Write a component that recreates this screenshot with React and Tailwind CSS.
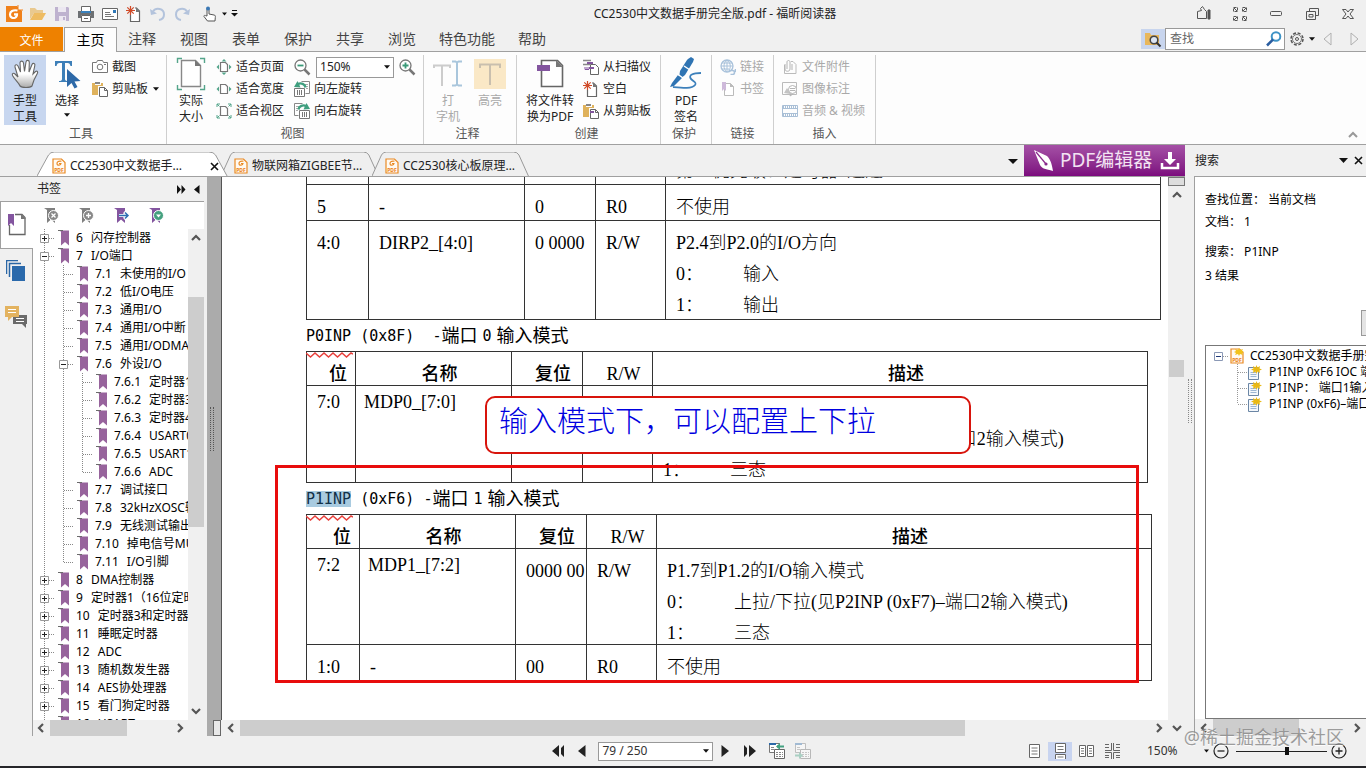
import { useState } from "react";

const tabs = ["注释", "视图", "表单", "保护", "共享", "浏览", "特色功能", "帮助"];

// depth: indent level, box: expander sign, end: last child of its level
const bookmarks = [
  { no: "6", text: "闪存控制器", depth: 0, box: "+" },
  { no: "7", text: "I/O端口", depth: 0, box: "-" },
  { no: "7.1", text: "未使用的I/O", depth: 1 },
  { no: "7.2", text: "低I/O电压", depth: 1 },
  { no: "7.3", text: "通用I/O", depth: 1 },
  { no: "7.4", text: "通用I/O中断", depth: 1 },
  { no: "7.5", text: "通用I/ODMA", depth: 1 },
  { no: "7.6", text: "外设I/O", depth: 1, box: "-" },
  { no: "7.6.1", text: "定时器1", depth: 2 },
  { no: "7.6.2", text: "定时器3", depth: 2 },
  { no: "7.6.3", text: "定时器4", depth: 2 },
  { no: "7.6.4", text: "USART0", depth: 2 },
  { no: "7.6.5", text: "USART1", depth: 2 },
  { no: "7.6.6", text: "ADC", depth: 2, end: true },
  { no: "7.7", text: "调试接口", depth: 1 },
  { no: "7.8", text: "32kHzXOSC输入", depth: 1 },
  { no: "7.9", text: "无线测试输出", depth: 1 },
  { no: "7.10", text: "掉电信号MUX", depth: 1 },
  { no: "7.11", text: "I/O引脚", depth: 1, end: true },
  { no: "8", text: "DMA控制器", depth: 0, box: "+" },
  { no: "9", text: "定时器1（16位定时器）", depth: 0, box: "+" },
  { no: "10", text: "定时器3和定时器4", depth: 0, box: "+" },
  { no: "11", text: "睡眠定时器", depth: 0, box: "+" },
  { no: "12", text: "ADC", depth: 0, box: "+" },
  { no: "13", text: "随机数发生器", depth: 0, box: "+" },
  { no: "14", text: "AES协处理器", depth: 0, box: "+" },
  { no: "15", text: "看门狗定时器", depth: 0, box: "+" },
  { no: "16", text: "USART", depth: 0, box: "+" },
];

const results = ["P1INP 0xF6 IOC 端口", "P1INP： 端口1输入模式", "P1INP (0xF6)–端口1"];

function Svg({ w = 16, h = 16, children, className = "" }) {
  return (
    <svg width={w} height={h} viewBox={`0 0 ${w} ${h}`} fill="none" className={`shrink-0 ${className}`} aria-hidden="true">
      {children}
    </svg>
  );
}

function Down({ className = "" }) {
  return <Svg w={7} h={4} className={className}><path d="M0 0h7L3.5 4z" fill="#111" /></Svg>;
}

function Chevron({ dir }) {
  const d = {
    up: "M1 7l4-4 4 4",
    down: "M1 3l4 4 4-4",
    left: "M7 1L3 5l4 4",
    right: "M3 1l4 4-4 4",
  };
  return <Svg w={10} h={10}><path d={d[dir]} stroke="#555" strokeWidth="2.2" /></Svg>;
}

/* ---------- quick access icons ---------- */

function AppLogo() {
  return (
    <Svg w={18} h={18}>
      <path d="M1 1h11l5 5v11H1z" fill="#f0811a" />
      <path d="M13 0v5h5" fill="#f7f7f7" stroke="#f0811a" />
      <path d="M12.500 5.500C8 4.500 5 6.500 5 9.500s2.500 4 5 3.200c1.500-.6 2-2 2-3.400H9" stroke="#fff" strokeWidth="2.200" />
    </Svg>
  );
}

function FolderOpen() {
  return (
    <Svg w={18} h={16}>
      <path d="M1 13V2h5l2 2h6v3H5z" fill="#e9c98f" />
      <path d="M5 7h12l-4 7H1z" fill="#eebc62" />
    </Svg>
  );
}

function Disk() {
  return (
    <Svg>
      <path d="M1 1h13l1 1v13H1z" fill="#beb2cf" />
      <path d="M4 1h8v5H4zM5 10h7v5H5z" fill="#ece8f1" />
      <path d="M9 11h2v3H9z" fill="#beb2cf" />
    </Svg>
  );
}

function Printer() {
  return (
    <Svg>
      <path d="M3.500.5h9v5h-9z" fill="#fff" stroke="#666" />
      <path d="M0 5h16v7h-3V9H3v3H0z" fill="#6d7073" />
      <path d="M3 5h10v2H3z" fill="#3b82bd" />
      <path d="M3.500 9.500h9v6h-9z" fill="#fff" stroke="#666" />
      <path d="M6 12.500h4" stroke="#666" />
    </Svg>
  );
}

function Mail() {
  return (
    <Svg w={17} h={14}>
      <path d="M.5 1.500h15v11H.5z" fill="#fff" stroke="#666" />
      <path d="M3 5.500h5M3 7.500h6M3 9.500h9" stroke="#777" />
      <path d="M11 3h3v3h-3z" fill="#2f78b7" />
    </Svg>
  );
}

function Burst() {
  return (
    <Svg>
      <path d="M4.500 9v6.500h9V5l-3-3H9" fill="#fff" stroke="#666" strokeWidth="1.200" />
      <path d="M10 1.500V6h4z" fill="#777" />
      <path d="M4.500 0v9M0 4.500h9M1.300 1.300l6.400 6.400M7.700 1.300L1.300 7.700" stroke="#d04a28" strokeWidth="1.200" />
    </Svg>
  );
}

function Undo({ flip }) {
  return (
    <Svg className={flip ? "-scale-x-100" : ""}>
      <path d="M3 5.500C6 1 14 2.500 14 8.500c0 3-2 5-5 5.500" stroke="#b3c3dc" strokeWidth="2" />
      <path d="M0 3l1 6 6-1.500z" fill="#b3c3dc" />
    </Svg>
  );
}

function Pointer() {
  return (
    <Svg>
      <path d="M5 10V3.500c0-1.500 2-1.500 2 0V8l5 1c1.500.3 1.500 1 1.300 2.500L13 15H5.500L2 10.500c-.5-1 1-1.500 1.700-.8z" fill="#fff" stroke="#555" />
      <circle cx="6" cy="2.500" r="2" fill="#3a78b5" />
    </Svg>
  );
}

/* ---------- ribbon icons ---------- */

function Hand() {
  return (
    <Svg w={28} h={30}>
      <defs>
        <linearGradient id="palm" x1="0" y1="0" x2="0" y2="1">
          <stop offset=".5" stopColor="#fff" />
          <stop offset="1" stopColor="#aaa" />
        </linearGradient>
      </defs>
      <path
        d="M9 27c-1-3-5-6-7.500-10.500-.8-2 1-3 2.500-1.500l3 3L4 8c-.5-2.500 2-3 3-1l2.500 6L9 4c0-2.500 3-2.500 3.500 0l1 8.500L15 3c.5-2.500 3.500-2 3.300.5L18 13l3-7.500c1-2 3.500-1 2.800 1.200L22 15l2.500-2.500c1.500-1 2.800.3 1.800 2L23 21l-2 6c-2 2-10 2-12 0z"
        fill="url(#palm)" stroke="#666" strokeWidth="1.100"
      />
    </Svg>
  );
}

function SelectText() {
  return (
    <Svg w={28} h={30}>
      <path d="M2 2h17v5h-1.500c-.5-2-1-3-3-3H12v16c0 1.500 1 2 3 2v1H6v-1c2 0 3-.5 3-2V4H6.500c-2 0-2.500 1-3 3H2z" fill="#3d7fb8" />
      <path d="M14 10v18l4.500-4 3 5.500 3-1.500-3-5.500 6-.5z" fill="#2d69a8" />
    </Svg>
  );
}

function Camera() {
  return (
    <Svg>
      <path d="M.5 3.500h4l1-2h5l1 2h4v10H.5z" fill="#fff" stroke="#777" />
      <circle cx="8" cy="8" r="2.800" stroke="#777" />
      <path d="M12 5.500h2" stroke="#777" />
    </Svg>
  );
}

function Clipboard({ mark }) {
  return (
    <Svg>
      <path d="M0 2h3v2h6V2h2v3H6v9H0z" fill="#dfb25c" />
      <path d="M3 1h5v2H3z" fill="#888" />
      <path d="M7.500 6.500h5l3 3v6h-8z" fill="#fff" stroke="#666" />
      <path d="M12.500 6.500v3h3" stroke="#666" />
      {mark && <path d="M7 8h4v2H7z" fill="#82559d" />}
    </Svg>
  );
}

function ActualSize() {
  return (
    <Svg w={30} h={34}>
      <path d="M5.500 3.500h14l5 5v21h-19z" fill="#fff" stroke="#888" strokeWidth="1.400" />
      <path d="M19 3v6h6z" fill="#777" />
      <path d="M1.500 6V1.500H6M24 1.500h4.500V6M28.500 28v4.500H24M6 32.500H1.500V28" stroke="#55a58b" strokeWidth="1.400" />
    </Svg>
  );
}

function FitPage({ kind }) {
  return (
    <Svg>
      <path d="M4.500 3.500h5l2 2v7h-7z" fill="#fff" stroke="#777" strokeWidth="1.200" />
      {kind !== "view" && <path d="M3 5.500v5L.5 8zM13 5.500v5L15.500 8z" fill="#55a58b" />}
      {kind === "page" && <path d="M5.500 2.500h5L8 0zM5.500 13.500h5L8 16z" fill="#55a58b" />}
      {kind === "view" && <path d="M1 4V1h3M12 1h3v3M15 12v3h-3M4 15H1v-3M1 1l2.500 2.500M15 1l-2.500 2.500M1 15l2.500-2.500M15 15l-2.500-2.500" stroke="#55a58b" />}
    </Svg>
  );
}

function Zoom({ plus }) {
  return (
    <Svg w={17} h={17}>
      <circle cx="6.500" cy="6.500" r="5.500" fill="#fff" stroke="#777" strokeWidth="1.300" />
      <path d="M10.500 10.500l5 5" stroke="#777" strokeWidth="2.500" />
      <path d={plus ? "M3.500 6.500h6M6.500 3.500v6" : "M3.500 6.500h6"} stroke="#3a9a78" strokeWidth="1.800" />
    </Svg>
  );
}

function Rotate({ right }) {
  return (
    <Svg className={right ? "-scale-x-100" : ""}>
      <path d="M7.500.5h8v12h-4" fill="#fff" stroke="#888" />
      <path d="M9 3.500h5M11 5.500h3M12 7.500h2" stroke="#aaa" />
      <path d="M.5 7.500h10v8H.5z" fill="#fff" stroke="#777" />
      <path d="M3.500 9v5M5.500 9v5M7.500 9v5" stroke="#777" />
      <path d="M11.500 6.500C11 3 7 1.500 4 3" stroke="#3f9f7f" strokeWidth="2.400" />
      <path d="M0 6l6.500.5L3.500 0z" fill="#3f9f7f" />
    </Svg>
  );
}

function Typewriter() {
  return (
    <Svg w={30} h={30}>
      <path d="M1 9V6.500h16V9M9 6.500V27" stroke="#ccc" strokeWidth="2" />
      <path d="M19 2.500h3.500l1.500 1 1.500-1H29M24 3.500v22M19 26.500h3.500l1.500-1 1.500 1H29" stroke="#a9c6dc" strokeWidth="2" />
    </Svg>
  );
}

function Highlight() {
  return (
    <Svg w={32} h={32}>
      <path d="M0 1h32v30H0z" fill="#fae8c6" />
      <path d="M6 10V6.500h20V10M16 6.500V27" stroke="#c9bfae" strokeWidth="2" />
    </Svg>
  );
}

function ToPdf() {
  return (
    <Svg w={28} h={32}>
      <path d="M5.500 2.500h16l5 5v21h-21z" fill="#fff" stroke="#666" strokeWidth="1.600" />
      <path d="M20 2v7h7z" fill="#777" />
      <path d="M1 7h13v6H1z" fill="#83559f" />
    </Svg>
  );
}

function Scanner() {
  return (
    <Svg>
      <path d="M0 1.500h8M0 5.500h7" stroke="#888" strokeWidth="1.500" />
      <path d="M4 3h6v2H4z" fill="#83559f" />
      <path d="M2 8v2.500h4M3 9h4" stroke="#83559f" />
      <path d="M7.500 5.500h5l3 3v7h-8z" fill="#fff" stroke="#666" />
      <path d="M6 8h5v2H6z" fill="#83559f" />
    </Svg>
  );
}

function SignPen() {
  return (
    <Svg w={32} h={34}>
      <path d="M18 2l3-2 3 2-1 3-8 13-5 4-1-1 1-7 7-11z" fill="#2f74b3" />
      <path d="M8 18l4 3-8 8-4 1 2-4z" fill="#2f74b3" />
      <path d="M6 16l7 5M14 9l6 4" stroke="#fff" strokeWidth="1.500" />
      <path d="M31 16c-8 0-13 2-10 6 3 3 6 3 4 6-3 4-12 3-22 2" stroke="#3d80bb" strokeWidth="1.800" />
    </Svg>
  );
}

function Globe() {
  return (
    <Svg>
      <circle cx="7" cy="7" r="6" stroke="#a9c2db" strokeWidth="1.300" />
      <path d="M1 7h12M2 4h10M2 10h7M7 1v12M7 1C3 4 3 10 7 13M7 1c4 3 4 8 2 10" stroke="#a9c2db" />
      <path d="M8.500 11.500h4a2 2 0 010 4h-2M15.500 10v3" stroke="#a9c2db" strokeWidth="1.600" />
    </Svg>
  );
}

function PageMark() {
  return (
    <Svg>
      <path d="M4.500 2.500h6l3 3v9h-9z" fill="#fff" stroke="#bbb" />
      <path d="M10 2v4h4z" fill="#bbb" />
      <path d="M2 1h4v9L4 8l-2 2z" fill="#ceb9da" />
    </Svg>
  );
}

function Clip() {
  return (
    <Svg>
      <path d="M9 2.500h2l3 3v9H2.500V6" stroke="#bbb" />
      <path d="M5 10V3c0-2 3-2 3 0v7c0 3-5 3-5 0V5M10 5v6" stroke="#b3b3b3" />
    </Svg>
  );
}

function ImageNote() {
  return (
    <Svg>
      <path d="M.5 1.500h14v12H.5z" stroke="#bbb" />
      <path d="M2 12l3-5 3 4v2z" fill="#c4c4c4" />
      <circle cx="10.500" cy="8.500" r="4" fill="#fff" stroke="#b5b5b5" />
      <path d="M8 7.500h5M8 9.500h5M9 12l-1 3 3-2" stroke="#b5b5b5" />
    </Svg>
  );
}

function Film() {
  return (
    <Svg>
      <path d="M.5 2.500h15v11H.5z" stroke="#a9bfd6" />
      <path d="M1 4h14M1 12h14" stroke="#a9bfd6" strokeWidth="2" strokeDasharray="1 1" />
      <path d="M1 5.500h14M1 10.500h14" stroke="#a9bfd6" />
    </Svg>
  );
}

/* ---------- panel icons ---------- */

function PdfIcon({ star }) {
  return (
    <Svg w={14} h={16}>
      <path d="M1 1h8.500L13 4.500V15H1z" fill="#fffaf2" stroke="#ea8a24" strokeWidth="1.200" />
      {star
        ? <path d="M9 0l1 2 3-1-1 2 2 1-2 1 1 2-3-1-1 2-1-2-3 1 1-2-2-1 2-1-1-2 3 1z" fill="#f2c21c" />
        : <path d="M9.500 3.300C7 2.500 4.700 3.800 5 5.800s3.800 1.800 4-.3H7" stroke="#ea8a24" strokeWidth="1.200" />}
      <text x="7" y="14" textAnchor="middle" fontSize="5" fontWeight="bold" fill="#ea7d14">PDF</text>
    </Svg>
  );
}

function ResultIcon() {
  return (
    <Svg w={14} h={15}>
      <path d="M.5 2.500h10v12H.5z" fill="#f4f8fc" stroke="#6b86a5" />
      <path d="M2.500 7.500h6M2.500 9.500h6M2.500 11.500h6" stroke="#9db7d4" />
      <path d="M8.500 0l1 2.500L12 1l-.5 2.500 2.500 1-2.500 1 .5 2.500-2.500-1.500-1 2.500-1-2.500L5 8l.5-2.500-2.500-1 2.500-1L5 1l2.500 1.500z" fill="#eab914" />
    </Svg>
  );
}

function BookmarkIcon() {
  return (
    <Svg w={12} h={16}>
      <path d="M2 .5h9v15l-4-3.500-4 3.500V2z" fill="#97639c" />
      <path d="M0 .5h5" stroke="#6b6b6b" />
    </Svg>
  );
}

function MarkTool({ kind }) {
  const fill = kind === "close" || kind === "add" ? "#808080" : "#83559f";
  return (
    <Svg w={16} h={17}>
      <path d="M0 1h11v15l-4-3.500L3 16V3z" fill={fill} />
      {kind === "close" && <><circle cx="9.500" cy="8.500" r="5" fill="#888" stroke="#fff" /><path d="M7.500 6.500l4 4m0-4l-4 4" stroke="#fff" strokeWidth="1.300" /></>}
      {kind === "add" && <><circle cx="9.500" cy="8.500" r="5" fill="#888" stroke="#fff" /><path d="M9.500 6v5M7 8.500h5" stroke="#fff" strokeWidth="1.300" /></>}
      {kind === "go" && <path d="M5 8.500h8M10 5l4 3.500-4 3.500" stroke="#fff" strokeWidth="3" />}
      {kind === "go" && <path d="M5 8.500h9M11 5.500l3 3-3 3" stroke="#2f6fb3" strokeWidth="1.500" />}
      {kind === "menu" && <><circle cx="9.500" cy="8.500" r="5" fill="#45a17f" stroke="#fff" /><path d="M7 7.500h5L9.500 10.500z" fill="#fff" /></>}
    </Svg>
  );
}

/* ---------- ribbon building blocks ---------- */

function Group({ label, className, children }) {
  return (
    <section className={`flex h-[89px] shrink-0 flex-col border-r border-[#cfcfcf] ${className}`} aria-label={label}>
      <div className="flex h-[70px]">{children}</div>
      <div className="h-[18px] pr-2 text-center leading-[18px] text-[#555]">{label}</div>
    </section>
  );
}

function BigButton({ icon, lines, className = "w-[42px]", disabled, arrow }) {
  return (
    <button disabled={disabled} className={`flex h-[70px] shrink-0 flex-col items-center leading-4 disabled:text-[#a9a9a9] ${className}`}>
      <span className="flex h-[38px] items-center">{icon}</span>
      {lines.map(l => <span key={l}>{l}</span>)}
      {arrow && <Down className="mt-1 w-[6px]" />}
    </button>
  );
}

function SmallButton({ icon, label, disabled, arrow }) {
  return (
    <button disabled={disabled} className="flex h-[22px] items-center gap-1 whitespace-nowrap disabled:text-[#a9a9a9]">
      {icon}
      <span>{label}</span>
      {arrow && <Down className="ml-px w-[6px]" />}
    </button>
  );
}

function TitleBar() {
  return (
    <header className="flex h-[27px] shrink-0 items-center">
      <div className="flex w-[240px] items-center pl-[2px]">
        {[<AppLogo />, <FolderOpen />, <Disk />, <Printer />, <Mail />, <Burst />, <Undo />, <Undo flip />].map((icon, i) => (
          <button key={i} className="flex h-6 w-6 items-center justify-center">{icon}</button>
        ))}
        <button className="ml-2 flex items-center gap-1"><Pointer /><Down className="w-[5px]" /></button>
        <button className="ml-1">
          <Svg w={7} h={7}><path d="M1 .5h5" stroke="#111" /><path d="M0 3h7L3.500 6.500z" fill="#111" /></Svg>
        </button>
      </div>
      <h1 className="flex-1 pl-1 text-center">CC2530中文数据手册完全版.pdf - 福昕阅读器</h1>
      <div className="flex text-[#555]">
        <button className="flex w-9 justify-center" aria-label="皮肤">
          <Svg><path d="M1.500 12.500v-7l4-1-1-2 2-2 2 3 2 2v7z" stroke="#555" /><path d="M12 4h2v9h-2z" fill="#555" stroke="#555" /></Svg>
        </button>
        <button className="flex w-9 justify-center" aria-label="全屏">
          <Svg><path d="M1.500 5.500v-4h4v4zM10.500 5.500v-4h4v4zM1.500 14.500v-4h4v4zM10.500 14.500v-4h4v4z" stroke="#555" strokeDasharray="3 1" /><path d="M2 2l3 3M14 2l-3 3M2 14l3-3M14 14l-3-3" stroke="#555" /></Svg>
        </button>
        <button className="flex w-9 justify-center" aria-label="最小化">
          <Svg><rect x="2.500" y="5.500" width="11" height="4" rx="1" stroke="#555" /></Svg>
        </button>
        <button className="flex w-9 justify-center" aria-label="还原">
          <Svg><path d="M5.500 5.500v-3h9v7h-3M2.500 5.500h9v8h-9zM5 8.500h4v2.500H5z" stroke="#555" /></Svg>
        </button>
        <button className="flex w-9 justify-center" aria-label="关闭">
          <Svg><path d="M2.500 3.500h3.500l2 2.500 2-2.500h3.500L10 8l3.500 4.500H10l-2-2.500-2 2.500H2.500L6 8z" stroke="#555" /></Svg>
        </button>
      </div>
    </header>
  );
}

function MenuBar() {
  return (
    <nav className="flex h-[25px] shrink-0 border-b border-[#a0a0a0] text-sm text-[#444]">
      <button className="w-[63px] bg-[#ee8100] pt-1 text-xs text-white">文件</button>
      <button className="-mb-px ml-px w-[53px] border border-b-0 border-[#a0a0a0] bg-[#fdfdfd] text-black">主页</button>
      <div className="-ml-px flex">
        {tabs.map(t => (
          <button key={t} className={t.length > 2 ? "w-[78px]" : "w-[52px]"}>{t}</button>
        ))}
      </div>
      <div className="ml-auto flex items-center pr-[7px] text-xs">
        <button className="flex h-5 w-6 items-center justify-center bg-[#c8d5ee]" aria-label="高级查找">
          <Svg w={18} h={17}>
            <path d="M1 2h5l1 2h8v10H1z" fill="#e8b75c" />
            <circle cx="10" cy="9" r="3.800" fill="#dbe4f2" stroke="#444" strokeWidth="1.500" />
            <path d="M12.500 11.500l4 4" stroke="#333" strokeWidth="2" />
          </Svg>
        </button>
        <label className="flex h-[22px] w-[120px] items-center border border-[#999] bg-white pr-[2px] pl-1">
          <input aria-label="查找" placeholder="查找" className="w-full min-w-0 bg-transparent outline-none placeholder:text-[#666]" />
          <Svg><circle cx="10" cy="5.500" r="4.300" stroke="#3e93c6" strokeWidth="2" /><path d="M7 8.500l-6 6" stroke="#2a5da0" strokeWidth="2.500" /></Svg>
        </label>
        <button className="ml-1 flex items-center gap-1" aria-label="设置">
          <Svg><circle cx="8" cy="8" r="6" stroke="#555" strokeWidth="1.500" strokeDasharray="3 1.700" /><circle cx="8" cy="8" r="4.500" stroke="#777" /><circle cx="8" cy="8" r="1.500" stroke="#555" /></Svg>
          <Down className="w-[6px]" />
        </button>
        <button className="ml-2" aria-label="上一个"><Svg w={9} h={14}><path d="M8 1v12L1 7z" stroke="#b0b0b0" /></Svg></button>
        <button className="ml-[18px]" aria-label="下一个"><Svg w={9} h={14}><path d="M1 1v12l7-6z" stroke="#b0b0b0" /></Svg></button>
      </div>
    </nav>
  );
}

function Ribbon() {
  const [zoom, setZoom] = useState("150%");
  return (
    <div className="flex h-[93px] shrink-0 border-b border-[#a0a0a0] bg-[#fdfdfd] pt-[3px]">
      <Group label="工具" className="w-[167px] pl-1">
        <BigButton icon={<Hand />} lines={["手型", "工具"]} className="w-[42px] bg-[#c7d6ef]" />
        <BigButton icon={<SelectText />} lines={["选择"]} arrow />
        <div className="ml-1 flex flex-col pt-px">
          <SmallButton icon={<Camera />} label="截图" />
          <SmallButton icon={<Clipboard />} label="剪贴板" arrow />
        </div>
      </Group>
      <Group label="视图" className="w-[257px] pl-[3px]">
        <BigButton icon={<ActualSize />} lines={["实际", "大小"]} />
        <div className="ml-1 flex flex-col pt-px">
          <SmallButton icon={<FitPage kind="page" />} label="适合页面" />
          <SmallButton icon={<FitPage kind="width" />} label="适合宽度" />
          <SmallButton icon={<FitPage kind="view" />} label="适合视区" />
        </div>
        <div className="ml-[10px] flex flex-col pt-px">
          <div className="flex h-[22px] items-center gap-[5px]">
            <button aria-label="缩小"><Zoom /></button>
            <span className="relative flex items-center">
              <select aria-label="缩放比例" value={zoom} onChange={e => setZoom(e.target.value)} className="h-[21px] w-[78px] appearance-none border border-[#999] bg-white pl-[3px] leading-4">
                <option>100%</option>
                <option>150%</option>
              </select>
              <Down className="absolute right-1 w-[6px]" />
            </span>
            <button aria-label="放大"><Zoom plus /></button>
          </div>
          <SmallButton icon={<Rotate />} label="向左旋转" />
          <SmallButton icon={<Rotate right />} label="向右旋转" />
        </div>
      </Group>
      <Group label="注释" className="w-[93px] pl-[3px]">
        <BigButton icon={<Typewriter />} lines={["打", "字机"]} disabled />
        <BigButton icon={<Highlight />} lines={["高亮"]} disabled />
      </Group>
      <Group label="创建" className="w-[144px] pl-1">
        <BigButton icon={<ToPdf />} lines={["将文件转", "换为PDF"]} className="w-[58px]" />
        <div className="ml-1 flex flex-col pt-px">
          <SmallButton icon={<Scanner />} label="从扫描仪" />
          <SmallButton icon={<Burst />} label="空白" />
          <SmallButton icon={<Clipboard mark />} label="从剪贴板" />
        </div>
      </Group>
      <Group label="保护" className="w-[51px] pl-1">
        <BigButton icon={<SignPen />} lines={["PDF", "签名"]} />
      </Group>
      <Group label="链接" className="w-[62px] pl-2">
        <div className="flex flex-col pt-px">
          <SmallButton icon={<Globe />} label="链接" disabled />
          <SmallButton icon={<PageMark />} label="书签" disabled />
        </div>
      </Group>
      <Group label="插入" className="w-[102px] pl-2">
        <div className="flex flex-col pt-px">
          <SmallButton icon={<Clip />} label="文件附件" disabled />
          <SmallButton icon={<ImageNote />} label="图像标注" disabled />
          <SmallButton icon={<Film />} label="音频 & 视频" disabled />
        </div>
      </Group>
      <button className="mt-auto mr-2 mb-1 ml-auto" aria-label="收起功能区">
        <Svg w={10} h={10}><path d="M1 7l4-4 4 4" stroke="#999" strokeWidth="2" /></Svg>
      </button>
    </div>
  );
}

function DocTab({ title, active, className }) {
  return (
    <div className={`relative flex h-6 items-center gap-1 pt-1 ${className}`}>
      <svg viewBox="0 0 200 24" preserveAspectRatio="none" className="absolute inset-0 h-full w-full" aria-hidden="true">
        <path d="M0 24L12 3q2-3 6-3h161q5 0 7 3l12 21" fill={active ? "#fff" : "#efefef"} stroke="#999" vectorEffect="non-scaling-stroke" />
      </svg>
      <span className="relative flex"><PdfIcon /></span>
      <button className="relative whitespace-nowrap">{title}</button>
      {active && (
        <button className="relative mr-[10px] ml-auto" aria-label="关闭标签">
          <Svg w={9} h={9}><path d="M1 1l7 7M8 1L1 8" stroke="#111" strokeWidth="1.600" /></Svg>
        </button>
      )}
    </div>
  );
}

function DocTabs() {
  return (
    <div className="flex h-8 shrink-0 items-end border-b border-[#a0a0a0]">
      <DocTab title="CC2530中文数据手…" active className="z-10 ml-[37px] w-[192px] pl-[15px]" />
      <DocTab title="物联网箱ZIGBEE节…" className="-ml-2 w-[159px] pl-[13px]" />
      <DocTab title="CC2530核心板原理…" className="-ml-2 w-[158px] pl-[13px]" />
      <button className="mr-[6px] mb-3 ml-auto" aria-label="标签列表"><Svg w={10} h={5}><path d="M0 0h10L5 5z" fill="#111" /></Svg></button>
      <button className="flex h-[31px] w-[161px] items-center bg-linear-to-b from-[#a550a6] to-[#7c0a7e] pl-[9px] text-[19px] text-[#f3e3f3]">
        <Svg w={22} h={24}><path d="M1 1l13 6c4 4 5 9 6 15-7-2-11-2-13-6z" fill="#fff" /><path d="M3 3l10 12" stroke="#8a2a8c" strokeWidth="1.200" /><circle cx="13" cy="15" r="1.600" fill="#8a2a8c" /></Svg>
        <span className="ml-[5px]">PDF编辑器</span>
        <Svg w={20} h={20} className="mr-[5px] ml-auto"><path d="M8 1h4v7h4l-6 6-6-6h4z" fill="#fff" /><path d="M2 12v5h16v-5" stroke="#fff" strokeWidth="2.500" /></Svg>
      </button>
    </div>
  );
}

/* ---------- left: bookmarks ---------- */

function Guide({ from = 0, to = 18, tee, box }) {
  return (
    <Svg w={19} h={18}>
      <path d={`M9.500 ${from}V${to}`} stroke="#888" strokeDasharray="1 1" />
      {tee && <path d="M10 9.500h10" stroke="#888" strokeDasharray="1 1" />}
      {box && (
        <>
          <path d="M5.500 5.500h8v8h-8z" fill="#fff" stroke="#999" />
          <path d={box === "+" ? "M7 9.500h5M9.500 7v5" : "M7 9.500h5"} stroke="#222" />
        </>
      )}
    </Svg>
  );
}

function BookmarkRow({ item }) {
  return (
    <li className="flex h-[18px] items-center whitespace-nowrap">
      {Array.from({ length: item.depth }, (_, i) => <Guide key={i} />)}
      <Guide tee box={item.box} to={item.end ? 9 : 18} />
      <span className="flex w-[19px] shrink-0 justify-center"><BookmarkIcon /></span>
      <a href="#bookmark" className="ml-[3px] flex gap-2"><span>{item.no}</span><span>{item.text}</span></a>
    </li>
  );
}

function SideBar() {
  return (
    <aside className="flex w-[207px] shrink-0 flex-col pr-[3px]">
      <div className="flex h-6 shrink-0 items-center pl-[37px]">
        <h2>书签</h2>
        <button className="ml-auto" aria-label="展开"><Svg w={9} h={9}><path d="M0 0l4 4.500L0 9zM4.500 0l4 4.500-4 4.500z" fill="#111" /></Svg></button>
        <button className="mr-1 ml-2" aria-label="收起"><Svg w={6} h={9}><path d="M5.500 0v9L0 4.500z" fill="#111" /></Svg></button>
      </div>
      <div className="flex min-h-0 flex-1">
        <div className="flex w-[33px] shrink-0 flex-col items-stretch">
          <button className="flex h-12 items-center justify-center border border-r-0 border-[#a0a0a0] bg-white" aria-label="书签">
            <Svg w={20} h={24}><path d="M8 1.500h7l3 3v17H2.500V12" stroke="#666" strokeWidth="1.300" /><path d="M14 1v5h5z" fill="#777" /><path d="M1 1h6v12l-3-3-3 3z" fill="#83559f" /></Svg>
          </button>
          <button className="flex h-[44px] items-center justify-center border-r border-[#a0a0a0]" aria-label="页面">
            <Svg w={20} h={22}><path d="M.5 14V.5H12M3.500 17V3.500H15" stroke="#2a66a5" strokeWidth="1.500" /><path d="M6 6h13v15H6z" fill="#2a69ab" /></Svg>
          </button>
          <button className="flex h-12 items-center justify-center border-r border-[#a0a0a0]" aria-label="注释">
            <Svg w={24} h={24}><path d="M9 10h14v9h-1v4l-4-4H9z" fill="#6b6b6b" /><path d="M1 1h14v11H8l-4 4v-4H1z" fill="#e3b360" /><path d="M4 4.500h8M4 7.500h8M12 13.500h8M12 16.500h8" stroke="#fff" strokeWidth="1.200" /></Svg>
          </button>
          <div className="flex-1 border-r border-[#a0a0a0]" />
        </div>
        <div className="flex min-w-0 flex-1 flex-col border-t border-[#a0a0a0] bg-white">
          <div className="flex h-[27px] shrink-0 items-center gap-[19px] pl-[11px]">
            {["close", "add", "go", "menu"].map(k => <button key={k} aria-label={k}><MarkTool kind={k} /></button>)}
          </div>
          <div className="flex min-h-0 flex-1 overflow-hidden">
            <ul className="min-w-0 flex-1 overflow-hidden pl-[2px] text-black">
              {bookmarks.map(b => <BookmarkRow key={b.no} item={b} />)}
            </ul>
            <div className="flex w-4 flex-col items-center bg-[#f0f0f0] py-1">
              <Chevron dir="up" />
              <div className="mt-[54px] h-[230px] w-full bg-[#cdcdcd]" />
              <span className="mt-auto"><Chevron dir="down" /></span>
            </div>
          </div>
          <div className="flex h-4 shrink-0 items-center bg-[#f0f0f0] pl-[3px]">
            <Chevron dir="left" />
            <div className="ml-1 h-full w-[77px] bg-[#cdcdcd]" />
            <span className="mr-[19px] ml-auto"><Chevron dir="right" /></span>
          </div>
        </div>
      </div>
    </aside>
  );
}

/* ---------- the page itself ---------- */

function Option({ bit, children }) {
  return <div className="flex h-[22px] whitespace-nowrap"><span className="w-[67px]">{bit}：</span>{children}</div>;
}

function Td({ children, className = "pt-[9px] pl-[10px]" }) {
  return <td className={`border border-[#333] p-0 align-top whitespace-nowrap ${className}`}>{children}</td>;
}

function Th({ children, className = "text-center" }) {
  return <th className={`border border-[#333] p-0 pt-[11px] align-top leading-[22px] font-medium ${className}`}>{children}</th>;
}

function HeadRow() {
  return (
    <thead>
      <tr className="h-[34px]">
        <Th className="pr-2 text-right">位</Th>
        <Th className="pl-3 text-center">名称</Th>
        <Th className="pr-[11px] text-right">复位</Th>
        <Th className="pl-3 text-center font-normal">R/W</Th>
        <Th className="pl-3 text-center">描述</Th>
      </tr>
    </thead>
  );
}

function Cols({ first }) {
  return (
    <colgroup>
      <col className={first} />
      <col className="w-[156px]" />
      <col className="w-[71px]" />
      <col className="w-[70px]" />
      <col className="w-[495px]" />
    </colgroup>
  );
}

function SectionTitle({ reg, mark, rest, port }) {
  return (
    <h3 className="relative flex h-[31px] items-center pt-[2px] font-['DejaVu_Sans_Mono','Noto_Sans_CJK_SC',monospace] text-[15px] leading-5 font-normal whitespace-pre">
      <span className={mark ? "bg-[#a9cbe0] leading-4 text-[#123047]" : ""}>{reg}</span>
      <span>{rest}</span>
      <span className="text-lg leading-5">端口</span>
      <span className="mx-[5px]">{port}</span>
      <span className="text-lg leading-5">输入模式</span>
      <svg width="47" height="6" viewBox="0 0 47 6" fill="none" className="absolute top-[32px] left-0 z-10" aria-hidden="true">
        <path d="M0 1l4.500 4L9 1l4.500 4L18 1l4.500 4L27 1l4.500 4L36 1l4.500 4L45 1l2 1" stroke="#e8403c" strokeWidth="1.500" />
      </svg>
    </h3>
  );
}

const tableStyle = "table-fixed border-collapse font-light";

function Page() {
  return (
    <div className="relative min-h-0 flex-1 overflow-hidden border-l border-[#555] bg-white pl-[84px] font-['Liberation_Serif','Noto_Sans_CJK_SC',serif] text-lg leading-[26px] text-black">
      <table className={`${tableStyle} w-[854px]`}>
        <Cols first="w-[62px]" />
        <tbody>
          <tr className="h-[7px]">
            <Td className="border-t-0" /><Td className="border-t-0" /><Td className="border-t-0" /><Td className="border-t-0" />
            <Td className="border-t-0 pl-[10px]">
              <div className="flex h-[6px] items-end overflow-hidden"><span className="leading-6">第三优先级：定时器1通道2</span></div>
            </Td>
          </tr>
          <tr className="h-[36px]"><Td>5</Td><Td>-</Td><Td>0</Td><Td>R0</Td><Td>不使用</Td></tr>
          <tr className="h-[99px]">
            <Td>4:0</Td><Td>DIRP2_[4:0]</Td><Td>0 0000</Td><Td>R/W</Td>
            <Td>
              <div className="flex flex-col gap-[9px]">
                <p className="h-[22px]">P2.4到P2.0的I/O方向</p>
                <Option bit="0">输入</Option>
                <Option bit="1">输出</Option>
              </div>
            </Td>
          </tr>
        </tbody>
      </table>

      <SectionTitle reg="P0INP" rest=" (0x8F)  -" port="0" />
      <table className={`${tableStyle} w-[841px]`}>
        <Cols first="w-[49px]" />
        <HeadRow />
        <tbody>
          <tr className="h-[97px]">
            <Td className="pt-[3px] pl-[10px]">7:0</Td><Td className="pt-[3px] pl-2">MDP0_[7:0]</Td><Td /><Td />
            <Td>
              <div className="flex flex-col gap-[9px]">
                <p className="h-[22px]">P0.7到P0.0的I/O输入模式</p>
                <Option bit="0">上拉/下拉(见P2INP (0xF7)–端口2输入模式)</Option>
                <Option bit="1">三态</Option>
              </div>
            </Td>
          </tr>
        </tbody>
      </table>

      <SectionTitle reg="P1INP" mark rest=" (0xF6) -" port="1" />
      <table className={`${tableStyle} w-[845px]`}>
        <Cols first="w-[53px]" />
        <HeadRow />
        <tbody>
          <tr className="h-[96px]">
            <Td className="pt-[3px] pl-[10px]">7:2</Td><Td className="pt-[3px] pl-2">MDP1_[7:2]</Td><Td>0000 00</Td><Td>R/W</Td>
            <Td>
              <div className="flex flex-col gap-[9px]">
                <p className="h-[22px]">P1.7到P1.2的I/O输入模式</p>
                <Option bit="0">上拉/下拉(见P2INP (0xF7)–端口2输入模式)</Option>
                <Option bit="1">三态</Option>
              </div>
            </Td>
          </tr>
          <tr className="h-[36px]"><Td>1:0</Td><Td>-</Td><Td>00</Td><Td>R0</Td><Td>不使用</Td></tr>
        </tbody>
      </table>

      {/* annotations drawn over the page */}
      <div className="absolute top-[219px] left-[263px] z-10 flex h-[58px] w-[486px] rounded-[10px] border-2 border-[#d8140c] bg-white pt-1 pl-3 text-[29px] leading-10 font-light whitespace-nowrap text-[#0000e0]">
        输入模式下，可以配置上下拉
      </div>
      <div className="absolute top-[288px] left-[53px] z-20 h-[218px] w-[864px] border-3 border-[#e80c0c]" />
    </div>
  );
}

function Viewer() {
  return (
    <>
      <div className="flex w-[14px] shrink-0 flex-col items-end justify-between bg-[#ababab]">
        <span />
        <span className="mr-[7px] mt-[-40px] h-[44px] w-1 border-x border-dotted border-[#555]" />
        <span className="h-4 w-2 border border-[#666] bg-[#e8e8e8]" />
      </div>
      <main className="flex min-w-0 flex-1 flex-col">
        <Page />
        <div className="flex h-4 shrink-0 items-center bg-[#f0f0f0] pl-[5px]">
          <Chevron dir="left" />
          <div className="ml-1 h-full w-10/13 bg-[#cdcdcd]" />
          <span className="mr-1 ml-auto"><Chevron dir="right" /></span>
        </div>
      </main>
      <div className="flex w-[17px] shrink-0 flex-col items-center bg-[#f0f0f0] pb-[3px]">
        <div className="h-[9px] w-full border border-[#777] bg-[#ddd]" />
        <span className="mt-1"><Chevron dir="up" /></span>
        <div className="mt-[160px] h-[17px] w-[15px] bg-[#cdcdcd]" />
        <span className="mt-auto"><Chevron dir="down" /></span>
      </div>
    </>
  );
}

/* ---------- right: search ---------- */

function SearchPanel() {
  return (
    <aside className="flex w-[181px] shrink-0 flex-col overflow-hidden">
      <div className="flex h-[31px] shrink-0 items-center pr-[3px] pl-[10px]">
        <h2>搜索</h2>
        <button className="mr-[6px] ml-auto" aria-label="菜单"><Svg w={9} h={5}><path d="M0 0h9L4.500 5z" fill="#111" /></Svg></button>
        <button aria-label="关闭搜索"><Svg w={9} h={9}><path d="M1 1l7 7M8 1L1 8" stroke="#111" strokeWidth="1.600" /></Svg></button>
      </div>
      <div className="flex min-h-0 flex-1">
        <div className="flex w-[9px] shrink-0 items-start justify-center pt-[203px]">
          <span className="h-[44px] w-1 border-x border-dotted border-[#888]" />
        </div>
        <div className="flex min-w-0 flex-1 flex-col border-t border-l border-[#a0a0a0] bg-white pt-3 pl-[10px] text-black">
          <p className="h-[22px] leading-[22px] whitespace-pre">查找位置： 当前文档</p>
          <p className="h-[22px] leading-[22px] whitespace-pre">文档： 1</p>
          <p className="mt-2 h-[22px] leading-[22px] whitespace-pre">搜索： P1INP</p>
          <p className="mt-[2px] h-[22px] leading-[22px]">3 结果</p>
          <button className="mt-[23px] ml-auto h-[26px] w-[5px] border border-r-0 border-[#999] bg-[#e4e4e4]" aria-label="新搜索" />
          <div className="mt-[9px] min-h-0 flex-1 overflow-hidden border border-r-0 border-[#777] pt-[2px] whitespace-pre">
            <div className="flex h-4 items-center pl-[2px]">
              <Svg w={22} h={16}><path d="M6.500 4.500h8v8h-8z" fill="#fff" stroke="#8a98b5" /><path d="M8 8.500h5" stroke="#223a7a" /><path d="M15 8.500h6" stroke="#999" strokeDasharray="1 1" /></Svg>
              <PdfIcon star />
              <span className="ml-[6px]">CC2530中文数据手册完全版</span>
            </div>
            <ul>
              {results.map((r, i) => (
                <li key={r} className="flex h-4 items-center pl-[20px]">
                  <Svg w={22} h={16}><path d={i === 2 ? "M11.500 0v8" : "M11.500 0v16"} stroke="#999" strokeDasharray="1 1" /><path d="M12 8.500h10" stroke="#999" strokeDasharray="1 1" /></Svg>
                  <ResultIcon />
                  <a href="#result" className="ml-[7px]">{r}</a>
                </li>
              ))}
            </ul>
          </div>
          <div className="-ml-[10px] flex h-[17px] shrink-0 items-center bg-[#f0f0f0] pl-1">
            <Chevron dir="left" />
            <div className="ml-1 h-full w-[86px] bg-[#cdcdcd]" />
            <span className="mr-1 ml-auto"><Chevron dir="right" /></span>
          </div>
        </div>
      </div>
    </aside>
  );
}

function SheetIcon({ kind }) {
  return (
    <Svg>
      {kind === "one" && <><path d="M3.500 1.500h10v13h-10z" fill="#fff" stroke="#666" /><path d="M5.500 5h6M5.500 8h6M5.500 11h6" stroke="#777" /></>}
      {kind === "scroll" && <><path d="M3.500.5h10v9h-10zM3.500 16v-4.500h10V16" fill="#fff" stroke="#666" /><path d="M5.500 3.500h6M5.500 6.500h6M5.500 14h6" stroke="#777" /></>}
      {kind === "two" && <><path d="M1.500 2.500h6v11h-6zM9.500 2.500h6v11h-6z" fill="#fff" stroke="#666" /><path d="M3 5.500h3M3 8h3M3 10.500h3M11 5.500h3M11 8h3M11 10.500h3" stroke="#777" /></>}
      {kind === "grid" && <path d="M7.500 0v7.500H1M9.500 0v7.500H16M7.500 16V9.500H1M9.500 16V9.500H16M1 1.500h4M1 4.500h4M12 1.500h4M12 4.500h4M1 12.500h4M1 14.500h4M12 12.500h4M12 14.500h4" stroke="#666" />}
    </Svg>
  );
}

function JumpIcon({ faded }) {
  return (
    <Svg className={faded ? "opacity-40" : ""}>
      <path d="M.5.500h10v9H.5z" fill="#fff" stroke="#777" />
      <path d="M0 0h7v2H0z" fill="#2d6aa8" />
      <path d="M2 4.500h3M2 6.500h3" stroke="#888" />
      <path d="M5.500 6.500h10v9h-10z" fill="#fff" stroke="#666" />
      <path d="M7 9.500h7M7 11.500h7M7 13.500h7" stroke="#888" strokeDasharray="2 1" />
      {faded
        ? <><path d="M0 12.500h6" stroke="#43a181" strokeWidth="2" /><path d="M8 12.500L4 9v7z" fill="#43a181" /></>
        : <><path d="M8 3.500h7" stroke="#43a181" strokeWidth="2" /><path d="M7 3.500L11 0v7z" fill="#43a181" /></>}
    </Svg>
  );
}

function StatusBar() {
  const [zoom, setZoom] = useState(56);
  return (
    <footer className="flex h-8 shrink-0 items-center border-b-2 border-[#26262a] text-[#333]">
      <div className="ml-[40%] flex items-center">
        <button className="ml-[6px]" aria-label="首页"><Svg w={14} h={12}><path d="M7 0v12L0 6zM12 0v12l-3-3V3z" fill="#222" /></Svg></button>
        <button className="ml-3" aria-label="上一页"><Svg w={8} h={12}><path d="M7.500 0v12L0 6z" fill="#222" /></Svg></button>
        <span className="relative ml-3 flex items-center">
          <select aria-label="页码" className="h-[19px] w-[115px] appearance-none border border-[#999] bg-white pl-[3px] leading-4">
            <option>79 / 250</option>
          </select>
          <Down className="absolute right-1 w-[6px]" />
        </span>
        <button className="ml-2" aria-label="下一页"><Svg w={8} h={12}><path d="M.5 0v12L8 6z" fill="#222" /></Svg></button>
        <button className="ml-[15px]" aria-label="末页"><Svg w={13} h={12}><path d="M0 0l3 3v6l-3 3zM5 0v12l7-6z" fill="#222" /></Svg></button>
        <button className="ml-3" aria-label="后退"><JumpIcon /></button>
        <button className="ml-[10px]" aria-label="前进"><JumpIcon faded /></button>
      </div>
      <div className="ml-auto flex items-center pr-[19px]">
        {["one", "scroll", "two", "grid"].map(k => (
          <button key={k} aria-label={k} className={`mr-[2px] flex h-[19px] w-6 items-center justify-center ${k === "scroll" ? "bg-[#c8d4f0]" : ""}`}>
            <SheetIcon kind={k} />
          </button>
        ))}
        <button className="ml-[21px] flex w-[62px] items-center justify-between">150%<Down className="w-[5px]" /></button>
        <button className="ml-1" aria-label="缩小"><Svg><circle cx="8" cy="8" r="7" stroke="#222" strokeWidth="1.200" /><path d="M4.500 8h7" stroke="#222" strokeWidth="1.300" /></Svg></button>
        <input
          type="range"
          aria-label="缩放"
          value={zoom}
          onChange={e => setZoom(Number(e.target.value))}
          className="mr-1 ml-[7px] h-4 w-[91px] appearance-none bg-transparent [&::-webkit-slider-runnable-track]:h-px [&::-webkit-slider-runnable-track]:bg-[#222] [&::-webkit-slider-thumb]:-mt-1 [&::-webkit-slider-thumb]:h-2 [&::-webkit-slider-thumb]:w-1 [&::-webkit-slider-thumb]:appearance-none [&::-webkit-slider-thumb]:bg-[#111]"
        />
        <button aria-label="放大"><Svg><circle cx="8" cy="8" r="7" stroke="#222" strokeWidth="1.200" /><path d="M4.500 8h7M8 4.500v7" stroke="#222" strokeWidth="1.300" /></Svg></button>
      </div>
    </footer>
  );
}

export default function App() {
  return (
    <div className="relative flex h-screen flex-col overflow-hidden bg-[#f0f0f0] font-['Noto_Sans','Noto_Sans_CJK_SC',sans-serif] text-xs text-[#222]">
      <TitleBar />
      <MenuBar />
      <Ribbon />
      <div className="flex min-h-0 flex-1">
        <div className="flex min-w-0 flex-1 flex-col">
          <DocTabs />
          <div className="flex min-h-0 flex-1">
            <SideBar />
            <Viewer />
          </div>
        </div>
        <SearchPanel />
      </div>
      <StatusBar />
      <p className="pointer-events-none absolute right-[22px] bottom-[19px] text-lg leading-6 text-[#888] opacity-80 text-shadow-2xs text-shadow-white">@稀土掘金技术社区</p>
    </div>
  );
}
